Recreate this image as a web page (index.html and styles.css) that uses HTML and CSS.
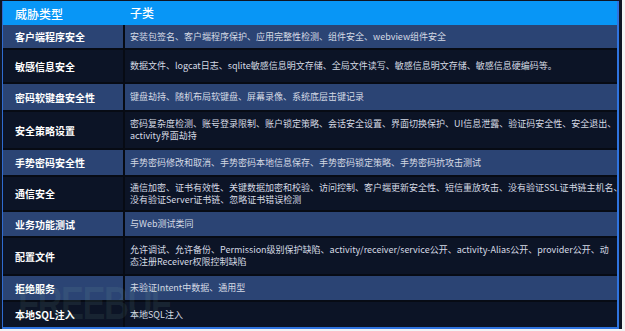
FILE: index.html
```html
<!DOCTYPE html>
<html lang="zh-CN">
<head>
<meta charset="utf-8">
<title>威胁类型</title>
<link rel="stylesheet" href="styles.css">
</head>
<body>
<div class="frame">
  <div class="grid">
    <div class="cell head type">威胁类型</div>
    <div class="cell head sub">子类</div>

    <div class="cell type odd">客户端程序安全</div>
    <div class="cell sub odd">安装包签名、客户端程序保护、应用完整性检测、组件安全、webview组件安全</div>

    <div class="cell type even">敏感信息安全</div>
    <div class="cell sub even">数据文件、logcat日志、sqlite敏感信息明文存储、全局文件读写、敏感信息明文存储、敏感信息硬编码等。</div>

    <div class="cell type odd">密码软键盘安全性</div>
    <div class="cell sub odd">键盘劫持、随机布局软键盘、屏幕录像、系统底层击键记录</div>

    <div class="cell type even">安全策略设置</div>
    <div class="cell sub even">密码复杂度检测、账号登录限制、账户锁定策略、会话安全设置、界面切换保护、UI信息泄露、验证码安全性、安全退出、<br>activity界面劫持</div>

    <div class="cell type odd">手势密码安全性</div>
    <div class="cell sub odd">手势密码修改和取消、手势密码本地信息保存、手势密码锁定策略、手势密码抗攻击测试</div>

    <div class="cell type even">通信安全</div>
    <div class="cell sub even">通信加密、证书有效性、关键数据加密和校验、访问控制、客户端更新安全性、短信重放攻击、没有验证SSL证书链主机名、<br>没有验证Server证书链、忽略证书错误检测</div>

    <div class="cell type odd">业务功能测试</div>
    <div class="cell sub odd">与Web测试类同</div>

    <div class="cell type even">配置文件</div>
    <div class="cell sub even">允许调试、允许备份、Permission级别保护缺陷、activity/receiver/service公开、activity-Alias公开、provider公开、动<br>态注册Receiver权限控制缺陷</div>

    <div class="cell type odd">拒绝服务</div>
    <div class="cell sub odd">未验证Intent中数据、通用型</div>

    <div class="cell type even last">本地SQL注入</div>
    <div class="cell sub even last">本地SQL注入</div>
  </div>
  <div class="watermark">FREEBUF</div>
</div>
</body>
</html>
```

FILE: styles.css
```css
html, body {
  margin: 0;
  padding: 0;
  background: #f2f3f5;
}

.frame {
  position: relative;
  width: 622px;
  height: 329px;
  box-sizing: border-box;
  padding: 1px 0 0 2px;
  background: #0f1524;
  overflow: hidden;
}

.grid {
  display: grid;
  grid-template-columns: 122px 492px;
  grid-template-rows: 24px 25px 34px 28px 38px 27px 35px 26px 38px 26px 25px;
  width: max-content;
  border-left: 1px solid #2f6bd0;
  border-right: 2px solid #2f74e0;
  border-bottom: 2px solid #2f74e0;
  font-family: "Noto Sans CJK SC", "Noto Sans", sans-serif;
}

.cell {
  display: flex;
  align-items: center;
  box-sizing: border-box;
  border-bottom: 2px solid #070b14;
  white-space: nowrap;
}

.cell.last {
  border-bottom: 0;
}

.type {
  padding-left: 12px;
  border-right: 2px solid #070b14;
  color: #ffffff;
  font-size: 10px;
  font-weight: 700;
}

.sub {
  padding-left: 5px;
  color: #d5dae4;
  font-size: 9px;
  line-height: 12px;
}

.head {
  background: #0896f6;
  border: 0;
  color: #ffffff;
  font-size: 12px;
  font-weight: 500;
}

.odd {
  background: #2b4474;
}

.even {
  background: #0c1426;
}

.watermark {
  position: absolute;
  left: 18px;
  top: 276px;
  font-family: "Liberation Sans", sans-serif;
  font-weight: 700;
  font-size: 46px;
  letter-spacing: -2px;
  color: rgba(140, 200, 170, 0.09);
  transform: scaleX(0.75);
  transform-origin: left top;
  pointer-events: none;
}
```
